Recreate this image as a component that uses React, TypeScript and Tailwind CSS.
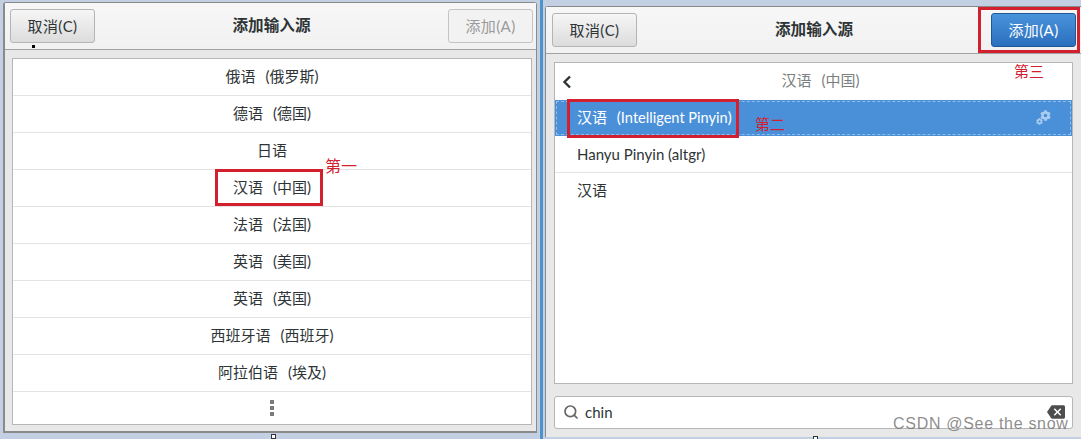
import { Search } from "lucide-react";
import { FaCog } from "react-icons/fa";
import { MdBackspace } from "react-icons/md";

const font = "font-['Lato','Noto_Sans_CJK_SC',sans-serif]";

const languages = [
  "俄语 (俄罗斯)",
  "德语 (德国)",
  "日语",
  "汉语 (中国)",
  "法语 (法国)",
  "英语 (美国)",
  "英语 (英国)",
  "西班牙语 (西班牙)",
  "阿拉伯语 (埃及)",
];

const Btn = ({ label, kind }: { label: string; kind: "normal" | "off" | "blue" }) => {
  const look =
    kind === "blue"
      ? "border-[#1f5a96] bg-gradient-to-b from-[#4a94dc] to-[#2a6fbd] text-white"
      : kind === "off"
        ? "border-[#c4c4c4] bg-[#f2f2f2] text-[#9a9a9a]"
        : "border-[#b4b4b4] bg-gradient-to-b from-[#f6f6f6] to-[#dcdcdc] text-[#2e3436]";
  return (
    <div className={`w-[85px] h-[34px] flex items-center justify-center rounded-[3px] border text-[15px] tracking-[0.4px] ${look}`}>
      {label}
    </div>
  );
};

const Header = ({ add }: { add: "off" | "blue" }) => (
  <div className={`h-[47px] shrink-0 flex items-center justify-between bg-gradient-to-b from-[#f7f7f7] to-[#f1f1f1] border-b border-[#a2a2a2] ${add === "blue" ? "pl-[6px] pr-[5px]" : "pl-[5px] pr-[3px]"}`}>
    <Btn label="取消(C)" kind="normal" />
    <span className="text-[15.6px] font-bold text-[#2e3436]">添加输入源</span>
    <Btn label="添加(A)" kind={add} />
  </div>
);

export default function App() {
  return (
    <div className={`relative flex w-[1081px] h-[439px] overflow-hidden bg-[#c3cfe3] ${font}`}>
      {/* left dialog */}
      <div className="w-[540px] shrink-0 pt-[2px] pl-[3px] pr-[3px]">
        <div className="h-[431px] flex flex-col bg-[#e8e8e8] border-l-2 border-t border-b-2 border-r border-[#8a8a8a] rounded-t-[3px]">
          <Header add="off" />
          <div className="pt-[8px] pl-[7px] pr-[4px]">
            <div className="h-[367px] bg-white border border-[#b6b6b6]">
              {languages.map((l) => (
                <div key={l} className="h-[37px] flex items-center justify-center pb-[2px] border-b border-[#e3e3e3] text-[15px] [word-spacing:6px] text-[#2e3436]">
                  {l}
                </div>
              ))}
              <div className="h-[32px] flex flex-col items-center justify-center gap-[2px]">
                <i className="w-[4px] h-[4px] bg-[#7b7b7b]" />
                <i className="w-[4px] h-[4px] bg-[#7b7b7b]" />
                <i className="w-[4px] h-[4px] bg-[#7b7b7b]" />
              </div>
            </div>
          </div>
        </div>
      </div>

      <div className="w-[3px] shrink-0 bg-[#4f93cc]" />

      {/* right dialog */}
      <div className="flex-1 pt-[6px] pl-[2px]">
        <div className="h-[431px] flex flex-col bg-[#e8e8e8] border-t border-l border-[#8a8a8a] rounded-tl-[3px]">
          <Header add="blue" />
          <div className="flex-1 flex flex-col pt-[8px] pl-[8px] pr-[8px]">
            <div className="h-[322px] bg-white border border-[#b6b6b6] text-[15px] text-[#2e3436]">
              <div className="relative h-[37px] flex items-center justify-center pl-[14px] pb-[2px] [word-spacing:6px] text-[#7c7f80]">
                <svg className="absolute left-[7px] top-[12px]" width="10" height="14" viewBox="0 0 10 14">
                  <path d="M8 1.5 L2.5 7 L8 12.5" fill="none" stroke="#2e3436" strokeWidth="2.4" />
                </svg>
                汉语 (中国)
              </div>
              <div className="h-[36px] flex items-center justify-between pl-[22px] pr-[21px] pb-[1px] bg-[#4a90d9] text-white outline-1 -outline-offset-2 outline-dashed outline-[#8fbce8]">
                <span className="[word-spacing:6px]">
                  汉语 (<span className="[word-spacing:0] text-[14.6px]">Intelligent Pinyin</span>)
                </span>
                <span className="relative w-[15px] h-[15px] text-[#a9cdf0]">
                  <FaCog size={11} className="absolute right-0 top-0" />
                  <FaCog size={7} className="absolute left-0 bottom-0" />
                </span>
              </div>
              <div className="h-[37px] flex items-center pl-[22px] border-b border-[#e3e3e3]">Hanyu Pinyin (altgr)</div>
              <div className="h-[36px] flex items-center pl-[22px] pb-[1px]">汉语</div>
            </div>
            <div className="mt-[12px] h-[33px] flex items-center gap-[6px] pl-[8px] pr-[7px] pb-[1px] bg-white border border-[#b6b6b6] rounded-[3px] text-[15px] text-[#2e3436]">
              <Search size={16} strokeWidth={2.6} className="text-[#666]" />
              <span className="flex-1">chin</span>
              <MdBackspace size={18} className="text-[#4d4d4d]" />
            </div>
          </div>
        </div>
      </div>

      {/* red annotations on top of the screenshots */}
      <div className="absolute left-[215px] top-[169px] w-[108px] h-[37px] border-[3px] border-[#d3202f]" />
      <div className="absolute left-[567px] top-[99px] w-[172px] h-[39px] border-[3px] border-[#d3202f]" />
      <div className="absolute left-[978px] top-[7px] w-[102px] h-[46px] border-[3px] border-[#d3202f]" />
      <span className="absolute left-[325px] top-[154px] text-[16px] text-[#d3202f]">第一</span>
      <span className="absolute left-[755px] top-[113px] text-[15px] text-[#d3202f]">第二</span>
      <span className="absolute left-[1014px] top-[60px] text-[15px] text-[#d3202f]">第三</span>

      <span className="absolute left-[893px] top-[412px] text-[16px] tracking-[0.7px] text-[#6f6f6f]/80 font-['Liberation_Sans',sans-serif]">CSDN @See the snow</span>
      <i className="absolute left-[32px] top-[45px] w-[3px] h-[3px] bg-black" />
      <i className="absolute left-[271px] top-[434px] w-[5px] h-[5px] bg-white border border-[#333]" />
      <i className="absolute left-[813px] top-[436px] w-[5px] h-[5px] bg-white border border-[#333]" />
    </div>
  );
}
